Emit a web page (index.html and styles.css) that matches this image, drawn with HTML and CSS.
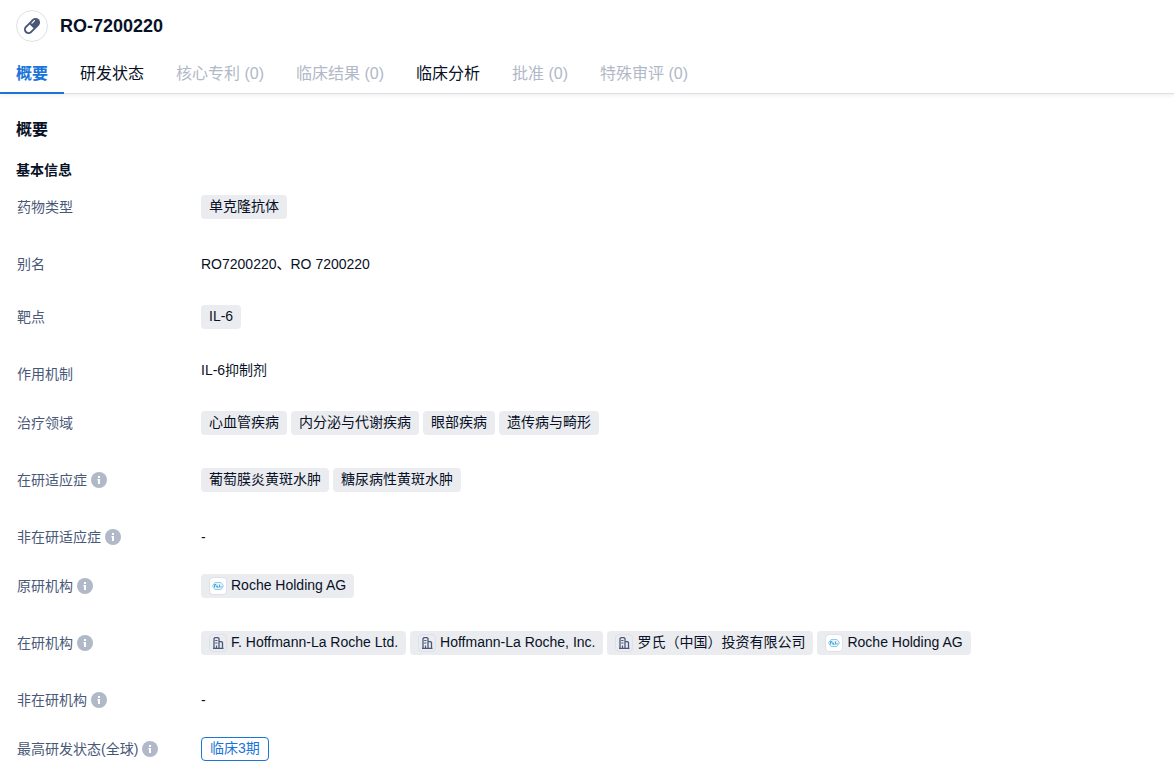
FILE: index.html
```html
<!DOCTYPE html>
<html lang="zh-CN">
<head>
<meta charset="utf-8">
<meta name="viewport" content="width=device-width, initial-scale=1">
<title>RO-7200220</title>
<link rel="stylesheet" href="styles.css">
</head>
<body>
<svg class="defs" width="0" height="0" aria-hidden="true">
  <symbol id="info" viewBox="0 0 16 16">
    <circle cx="8" cy="8" r="8" fill="#b1b8c7"/>
    <path d="M7 4h2v2H7zM6.500 7H9v5H7V8.500h-.5z" fill="#fff"/>
  </symbol>
  <symbol id="building" viewBox="0 0 16 16">
    <path d="M4 13.500V3.500L5 2.700h3l1 .8v10M9 6.700h2.600l.9.900v5.900M3 13.300h10.500" fill="none" stroke="#4a5878" stroke-width="1.300"/>
    <path d="M5.200 5.500h2.300M5.200 8h2.300" stroke="#4a5878" stroke-width="1"/>
    <path d="M6.500 13v-2.500" stroke="#4a5878" stroke-width="1.200"/>
  </symbol>
  <symbol id="roche" viewBox="0 0 16 16">
    <path d="M5 4.500h6L13.500 8 11 11.500H5L2.500 8z" fill="#e6f5fd" stroke="#8ecbed" stroke-width="1" stroke-linejoin="round"/>
    <path d="M4.500 9.500v-3H6V8l1 1.500M7.500 7.700v1.600h1M9.500 6.500v3M11 8v1.500" fill="none" stroke="#3f9fd3" stroke-width=".9"/>
  </symbol>
</svg>

<header class="header">
  <div class="title">
    <span class="avatar">
      <svg width="20" height="20" viewBox="0 0 20 20" aria-hidden="true">
        <g transform="rotate(-45 10 10)">
          <rect x="0.500" y="5.500" width="19" height="9" rx="4.500" fill="#4a5878"/>
          <path d="M9.500 7.300H5.200a2.700 2.700 0 0 0 0 5.400h4.300z" fill="#fff"/>
          <path d="M12 8h3.500" stroke="#fff" stroke-width="1.200" stroke-linecap="round"/>
        </g>
      </svg>
    </span>
    <h1 class="name">RO-7200220</h1>
  </div>
  <nav class="tabs">
    <button class="tab tab-active" type="button">概要</button>
    <button class="tab" type="button">研发状态</button>
    <button class="tab" type="button" disabled>核心专利 (0)</button>
    <button class="tab" type="button" disabled>临床结果 (0)</button>
    <button class="tab" type="button">临床分析</button>
    <button class="tab" type="button" disabled>批准 (0)</button>
    <button class="tab" type="button" disabled>特殊审评 (0)</button>
  </nav>
</header>

<main class="content">
  <h2 class="section-title">概要</h2>
  <h3 class="sub-title">基本信息</h3>

  <dl class="group group-wide">
    <div class="row"><dt class="label">药物类型</dt><dd class="value"><span class="tag">单克隆抗体</span></dd></div>
    <div class="row"><dt class="label">别名</dt><dd class="value">RO7200220、RO 7200220</dd></div>
  </dl>
  <dl class="group">
    <div class="row"><dt class="label">靶点</dt><dd class="value"><a class="tag" href="#">IL-6</a></dd></div>
    <div class="row"><dt class="label">作用机制</dt><dd class="value value-short">IL-6抑制剂</dd></div>
  </dl>
  <dl class="group">
    <div class="row"><dt class="label">治疗领域</dt><dd class="value"><span class="tag">心血管疾病</span><span class="tag">内分泌与代谢疾病</span><span class="tag">眼部疾病</span><span class="tag">遗传病与畸形</span></dd></div>
    <div class="row"><dt class="label">在研适应症<svg class="info"><use href="#info"/></svg></dt><dd class="value"><a class="tag" href="#">葡萄膜炎黄斑水肿</a><a class="tag" href="#">糖尿病性黄斑水肿</a></dd></div>
    <div class="row"><dt class="label">非在研适应症<svg class="info"><use href="#info"/></svg></dt><dd class="value">-</dd></div>
  </dl>
  <dl class="group">
    <div class="row"><dt class="label">原研机构<svg class="info"><use href="#info"/></svg></dt><dd class="value"><a class="tag" href="#"><svg class="logo logo-white"><use href="#roche"/></svg>Roche Holding AG</a></dd></div>
    <div class="row"><dt class="label">在研机构<svg class="info"><use href="#info"/></svg></dt><dd class="value"><a class="tag" href="#"><svg class="logo"><use href="#building"/></svg>F. Hoffmann-La Roche Ltd.</a><a class="tag" href="#"><svg class="logo"><use href="#building"/></svg>Hoffmann-La Roche, Inc.</a><a class="tag" href="#"><svg class="logo"><use href="#building"/></svg>罗氏（中国）投资有限公司</a><a class="tag" href="#"><svg class="logo logo-white"><use href="#roche"/></svg>Roche Holding AG</a></dd></div>
    <div class="row"><dt class="label">非在研机构<svg class="info"><use href="#info"/></svg></dt><dd class="value">-</dd></div>
  </dl>
  <dl class="group">
    <div class="row"><dt class="label">最高研发状态(全球)<svg class="info"><use href="#info"/></svg></dt><dd class="value"><span class="tag tag-phase">临床3期</span></dd></div>
  </dl>
</main>
</body>
</html>
```

FILE: styles.css
```css
* {
  box-sizing: border-box;
}

body {
  margin: 0;
  background: #fff;
  color: #081126;
  font: 14px/24px "Liberation Sans", "Noto Sans CJK SC", sans-serif;
}

.defs {
  position: absolute;
}

.header {
  border-bottom: 1px solid #dcdee3;
  box-shadow: 0 2px 4px rgba(0, 0, 0, 0.06);
}

.title {
  display: flex;
  align-items: center;
  gap: 12px;
  padding: 10px 16px;
}

.avatar {
  display: flex;
  align-items: center;
  justify-content: center;
  width: 32px;
  height: 32px;
  border: 1px solid #dfe1e8;
  border-radius: 50%;
}

.name {
  margin: 0;
  font-size: 18px;
  line-height: 24px;
}

.tabs {
  display: flex;
  margin-bottom: -1px;
}

.tab {
  padding: 10px 16px 6px;
  border: 0;
  border-bottom: 2px solid transparent;
  background: none;
  color: #081126;
  font: inherit;
  font-size: 16px;
  cursor: pointer;
}

.tab:disabled {
  color: #b1b8c7;
  cursor: default;
}

.tab-active {
  border-bottom-color: #1b74d8;
  color: #1b74d8;
  font-weight: 700;
}

.content {
  padding: 24px 17px 15px 16px;
}

.section-title {
  margin: 0;
  font-size: 16px;
  line-height: 24px;
}

.sub-title {
  margin: 16px 0 13px;
  font-size: 14px;
  line-height: 24px;
}

.group {
  display: grid;
  gap: 33px;
  margin: 0 0 25px 1px;
}

.group:last-child {
  margin-bottom: 0;
}

.group-wide {
  margin-bottom: 29px;
}

.row {
  display: grid;
  grid-template-columns: 184px 1fr;
}

.label {
  display: flex;
  align-items: center;
  gap: 4px;
  color: #4a5878;
}

.info {
  width: 16px;
  height: 16px;
}

.value {
  display: flex;
  flex-wrap: wrap;
  align-items: center;
  gap: 4px;
  margin: 0;
}

.value-short {
  align-self: start;
  line-height: 16px;
}

.tag {
  display: flex;
  align-items: center;
  gap: 4px;
  height: 24px;
  padding: 0 8px 2px;
  border-radius: 4px;
  background: #ebecf0;
  color: #081126;
  text-decoration: none;
}

.tag-phase {
  border: 1px solid #1b74d8;
  background: #fff;
  color: #1b74d8;
}

.logo {
  width: 18px;
  height: 18px;
  margin-top: 2px;
  border: 1px solid #dfe1e8;
  border-radius: 4px;
}

.logo-white {
  background: #fff;
}
```
